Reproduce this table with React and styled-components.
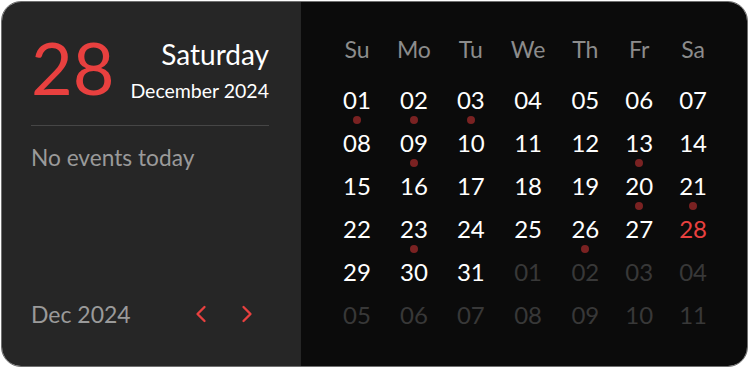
import React from 'react';
import styled, { createGlobalStyle } from 'styled-components';
import { ChevronLeft, ChevronRight } from 'lucide-react';

const GlobalStyle = createGlobalStyle`
	* {
		box-sizing: border-box;
	}
	body {
		margin: 0;
		background: #fff;
		font-family: Lato, 'Noto Sans', sans-serif;
	}
`;

const Page = styled.div`
	padding: 1px;
`;

const Card = styled.div`
	display: flex;
	height: 366px;
	border: 1px solid #707070;
	border-radius: 20px;
	overflow: hidden;
`;

const Side = styled.div`
	width: 299px;
	flex-shrink: 0;
	background: #262626;
	display: flex;
	flex-direction: column;
	padding: 29px 32px 34px 29px;
`;

const DateHead = styled.div`
	display: flex;
	justify-content: space-between;
	align-items: flex-end;
`;

const BigDay = styled.div`
	font-size: 72px;
	line-height: 72px;
	color: #e8403f;
`;

const DateText = styled.div`
	display: flex;
	flex-direction: column;
	align-items: flex-end;
	gap: 9px;
	color: #fff;
`;

const Weekday = styled.div`
	font-size: 28px;
	line-height: 32px;
`;

const MonthYear = styled.div`
	font-size: 19.5px;
	line-height: 24px;
`;

const Divider = styled.hr`
	border: 0;
	height: 1px;
	background: #464646;
	margin: 22px 0 19px;
`;

const Events = styled.div`
	font-size: 22.7px;
	line-height: 26px;
	color: #9a9a9a;
`;

const Footer = styled.div`
	margin-top: auto;
	display: flex;
	align-items: center;
	justify-content: space-between;
`;

const Month = styled.div`
	font-size: 23px;
	line-height: 26px;
	color: #9a9a9a;
`;

const Nav = styled.div`
	display: flex;
	gap: 2px;
`;

const NavButton = styled.button`
	width: 44px;
	height: 36px;
	padding: 0;
	border: 0;
	background: none;
	color: #e8403f;
	display: flex;
	align-items: center;
	justify-content: center;
	cursor: pointer;
`;

const Main = styled.div`
	flex: 1;
	background: #0b0b0b;
	display: flex;
	justify-content: center;
	padding: 33px 0 0 2px;
`;

const Grid = styled.div`
	display: grid;
	grid-template-columns: repeat(7, auto);
	grid-template-rows: 51px;
	grid-auto-rows: 43px;
	column-gap: 26px;
	align-content: start;
`;

const HeadCell = styled.div`
	font-size: 23px;
	line-height: 28px;
	color: #8c8c8c;
	text-align: center;
`;

const DayCell = styled.div`
	display: flex;
	flex-direction: column;
	align-items: center;
`;

const DayNum = styled.span`
	font-size: 24px;
	line-height: 28px;
	color: ${(props) => (props.$today ? '#e8403f' : props.$muted ? '#383838' : '#fff')};
`;

const Dot = styled.span`
	width: 8px;
	height: 8px;
	margin-top: 2px;
	border-radius: 50%;
	background: #7a2222;
`;

const weekdays = ['Su', 'Mo', 'Tu', 'We', 'Th', 'Fr', 'Sa'];
const withEvents = [1, 2, 3, 9, 13, 20, 21, 23, 26];
const today = 28;

const days = [
	...Array.from({ length: 31 }, (_, i) => ({ n: i + 1, muted: false })),
	...Array.from({ length: 11 }, (_, i) => ({ n: i + 1, muted: true })),
];

const pad = (n) => String(n).padStart(2, '0');

export default function App() {
	return (
		<Page>
			<GlobalStyle />
			<Card>
				<Side>
					<DateHead>
						<BigDay>28</BigDay>
						<DateText>
							<Weekday>Saturday</Weekday>
							<MonthYear>December 2024</MonthYear>
						</DateText>
					</DateHead>
					<Divider />
					<Events>No events today</Events>
					<Footer>
						<Month>Dec 2024</Month>
						<Nav>
							<NavButton aria-label="Previous month">
								<ChevronLeft size={28} strokeWidth={2} />
							</NavButton>
							<NavButton aria-label="Next month">
								<ChevronRight size={28} strokeWidth={2} />
							</NavButton>
						</Nav>
					</Footer>
				</Side>
				<Main>
					<Grid>
						{weekdays.map((d) => (
							<HeadCell key={d}>{d}</HeadCell>
						))}
						{days.map((d, i) => (
							<DayCell key={i}>
								<DayNum $muted={d.muted} $today={!d.muted && d.n === today}>
									{pad(d.n)}
								</DayNum>
								{!d.muted && withEvents.includes(d.n) && <Dot />}
							</DayCell>
						))}
					</Grid>
				</Main>
			</Card>
		</Page>
	);
}
